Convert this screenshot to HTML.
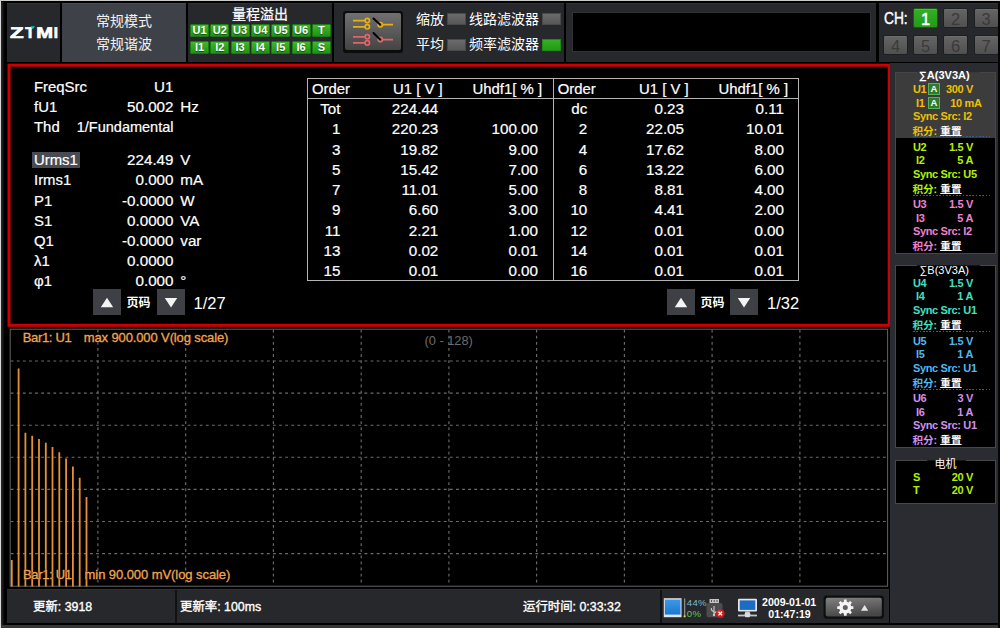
<!DOCTYPE html><html lang="zh"><head><meta charset="utf-8"><title>Power Analyzer</title><style>
*{box-sizing:border-box;margin:0;padding:0}
html,body{width:1000px;height:628px;overflow:hidden;background:#000}
body{position:relative;font-family:"Liberation Sans","Noto Sans CJK SC",sans-serif;color:#fff;font-size:14px}
.ab{position:absolute}
.pn{position:absolute;top:3px;height:59px;background:#27282c;border-top:1px solid #323338}
.t{position:absolute;white-space:nowrap;line-height:1}
.cj{font-family:"Liberation Sans","Noto Sans CJK SC",sans-serif}
.gb{position:absolute;width:19px;height:13px;background:linear-gradient(#3fb82a,#1f9414);border:1px solid #1c7a12;border-radius:1px;color:#fff;font-weight:bold;font-size:11px;line-height:11px;text-align:center;text-shadow:0 1px 1px rgba(0,0,0,.5)}
.ind{position:absolute;width:19px;height:12px;background:linear-gradient(#6b6b6b,#575757);border:1px solid #4a4a4a}
.ind.on{background:linear-gradient(#33b024,#229a16);border-color:#1f8a14}
.chb{position:absolute;width:25px;height:20px;background:linear-gradient(#656565,#505050);border:1px solid #1d1e20;border-radius:2px;box-shadow:inset 0 1px 0 #6e6e6e;color:#3a3a3a;font-size:16.5px;line-height:18px;padding-top:1px;text-align:center}
.chb.on{background:linear-gradient(#35ae25,#249a18);border-color:#1a5a14;box-shadow:inset 0 1px 0 #4cc03a;color:#fff;-webkit-text-stroke:.5px #fff}
.d{position:absolute;white-space:nowrap;font-size:14.5px;line-height:16px;color:#fff;-webkit-text-stroke:.2px #fff}
.r{text-align:right}
.n{font-size:15.2px}
.l{font-size:14.9px}
.pb{position:absolute;width:28px;height:26px;background:#3f4046}
.sb{position:absolute;white-space:nowrap;font-weight:bold;font-size:11px;line-height:12px;letter-spacing:-.35px}
</style></head><body>
<div class="ab" style="left:0;top:0;width:1000px;height:1px;background:#c9c9c9"></div>
<div class="ab" style="left:0;top:1px;width:1px;height:627px;background:#d8d8d8"></div>
<div class="ab" style="left:1px;top:2px;width:3px;height:626px;background:linear-gradient(90deg,#2a2a2a,#0a0a0a)"></div>
<div class="pn" style="left:7px;width:53px"></div>
<svg class="ab" style="left:7px;top:20px" width="53" height="24" viewBox="7 20 53 24" role="img" aria-label="ZTMI"><title>ZTMI</title><text y="37.6" font-family="Liberation Sans,sans-serif" font-weight="bold" font-size="15.6" text-rendering="geometricPrecision" fill="#fff" stroke="#fff" stroke-width=".7"><tspan x="10" textLength="13.6" lengthAdjust="spacingAndGlyphs">Z</tspan><tspan x="25.2" textLength="9.6" lengthAdjust="spacingAndGlyphs">T</tspan><tspan x="36.2" textLength="16.8" lengthAdjust="spacingAndGlyphs">M</tspan><tspan x="53.7" textLength="4.2" lengthAdjust="spacingAndGlyphs">I</tspan></text><rect x="31.9" y="25" width="4.2" height="5" fill="#27282c"/><path d="M30.3 26.3h4.8l-2.4 3z" fill="#19c4b4"/></svg>
<div class="pn" style="left:62px;width:124px;background:#3e4147;border-top-color:#4a4d53"></div>
<div class="t cj" style="left:62px;width:124px;text-align:center;top:13px;font-size:14px;line-height:16px;color:#f2f2f2">常规模式</div>
<div class="t cj" style="left:62px;width:124px;text-align:center;top:36px;font-size:14px;line-height:16px;color:#f2f2f2">常规谐波</div>
<div class="pn" style="left:188px;width:144px"></div>
<div class="t cj" style="left:188px;width:144px;text-align:center;top:6px;font-size:14px;line-height:16px;font-weight:400;-webkit-text-stroke:.25px #fff">量程溢出</div>
<div class="gb" style="left:190.0px;top:24px">U1</div>
<div class="gb" style="left:190.0px;top:41px">I1</div>
<div class="gb" style="left:210.3px;top:24px">U2</div>
<div class="gb" style="left:210.3px;top:41px">I2</div>
<div class="gb" style="left:230.6px;top:24px">U3</div>
<div class="gb" style="left:230.6px;top:41px">I3</div>
<div class="gb" style="left:250.9px;top:24px">U4</div>
<div class="gb" style="left:250.9px;top:41px">I4</div>
<div class="gb" style="left:271.2px;top:24px">U5</div>
<div class="gb" style="left:271.2px;top:41px">I5</div>
<div class="gb" style="left:291.5px;top:24px">U6</div>
<div class="gb" style="left:291.5px;top:41px">I6</div>
<div class="gb" style="left:311.8px;top:24px">T</div>
<div class="gb" style="left:311.8px;top:41px">S</div>
<div class="pn" style="left:334px;width:230px"></div>
<div class="ab" style="left:342.5px;top:10.5px;width:60px;height:42px;background:#0c0c0c;border-radius:3px"></div>
<div class="ab" style="left:345px;top:13px;width:56px;height:37px;background:linear-gradient(#707070,#444);border-radius:2px"></div>
<svg class="ab" style="left:345px;top:13px" width="56" height="37" viewBox="345 13 56 37">
<g fill="none" stroke-width="1.7">
<g stroke="#e8b010"><path d="M353 20.6H365M353 26.8H365M383 24.7H393"/><circle cx="367.3" cy="20.6" r="2.2"/><circle cx="367.3" cy="26.8" r="2.2"/><circle cx="380.3" cy="24.7" r="2.2"/></g>
<g stroke="#e06468"><path d="M353 36.8H365M353 42.9H365M383 39.6H393"/><circle cx="367.3" cy="36.8" r="2.2"/><circle cx="367.3" cy="42.9" r="2.2"/><circle cx="380.3" cy="39.6" r="2.2"/></g>
<g stroke="#000" stroke-width="2" stroke-linecap="round"><path d="M373.5 18.5L380 24.5M373.5 33L380 39.4"/></g>
</g></svg>
<div class="t cj" style="left:416px;top:11px;font-size:14px;line-height:16px">缩放</div>
<div class="t cj" style="left:416px;top:36px;font-size:14px;line-height:16px">平均</div>
<div class="ind" style="left:447px;top:13px"></div>
<div class="ind" style="left:447px;top:39px"></div>
<div class="t cj" style="left:469px;top:11px;font-size:14px;line-height:16px">线路滤波器</div>
<div class="t cj" style="left:469px;top:36px;font-size:14px;line-height:16px">频率滤波器</div>
<div class="ind" style="left:542px;top:13px"></div>
<div class="ind on" style="left:542px;top:39px"></div>
<div class="pn" style="left:566px;width:310px"></div>
<div class="ab" style="left:572px;top:12px;width:299px;height:40px;background:#000;border:1px solid #303134"></div>
<div class="pn" style="left:879px;width:119px"></div>
<div class="t" style="left:884px;top:10px;font-size:16px;line-height:18px;-webkit-text-stroke:.4px #fff;transform:scaleX(.86);transform-origin:left">CH:</div>
<div class="chb on" style="left:913px;top:8px">1</div>
<div class="chb" style="left:943px;top:8px">2</div>
<div class="chb" style="left:973.5px;top:8px">3</div>
<div class="chb" style="left:883px;top:35px">4</div>
<div class="chb" style="left:913px;top:35px">5</div>
<div class="chb" style="left:943px;top:35px">6</div>
<div class="chb" style="left:973.5px;top:35px">7</div>
<svg class="ab" style="left:0;top:60px" width="900" height="270" viewBox="0 60 900 270"><rect x="9" y="65.2" width="880.2" height="260.1" fill="#000" stroke="#cc0000" stroke-width="3"/></svg>
<div class="ab" style="left:32px;top:152px;width:48px;height:16px;background:#494a52"></div>
<div class="d l" style="left:34px;top:78.6px">FreqSrc</div>
<div class="d r n" style="left:60px;width:113.5px;top:78.6px">U1</div>
<div class="d l" style="left:34px;top:98.9px">fU1</div>
<div class="d r n" style="left:60px;width:113.5px;top:98.9px">50.002</div>
<div class="d n" style="left:180.3px;top:98.9px">Hz</div>
<div class="d l" style="left:34px;top:119.1px">Thd</div>
<div class="d r" style="left:60px;width:113.5px;top:119.1px">1/Fundamental</div>
<div class="d l" style="left:34px;top:151.6px">Urms1</div>
<div class="d r n" style="left:60px;width:113.5px;top:151.6px">224.49</div>
<div class="d n" style="left:180.3px;top:151.6px">V</div>
<div class="d l" style="left:34px;top:172.4px">Irms1</div>
<div class="d r n" style="left:60px;width:113.5px;top:172.4px">0.000</div>
<div class="d n" style="left:180.3px;top:172.4px">mA</div>
<div class="d l" style="left:34px;top:192.6px">P1</div>
<div class="d r n" style="left:60px;width:113.5px;top:192.6px">-0.0000</div>
<div class="d n" style="left:180.3px;top:192.6px">W</div>
<div class="d l" style="left:34px;top:212.6px">S1</div>
<div class="d r n" style="left:60px;width:113.5px;top:212.6px">0.0000</div>
<div class="d n" style="left:180.3px;top:212.6px">VA</div>
<div class="d l" style="left:34px;top:232.6px">Q1</div>
<div class="d r n" style="left:60px;width:113.5px;top:232.6px">-0.0000</div>
<div class="d n" style="left:180.3px;top:232.6px">var</div>
<div class="d l" style="left:34px;top:253.0px">λ1</div>
<div class="d r n" style="left:60px;width:113.5px;top:253.0px">0.0000</div>
<div class="d l" style="left:34px;top:272.9px">φ1</div>
<div class="d r n" style="left:60px;width:113.5px;top:272.9px">0.000</div>
<div class="d n" style="left:180.3px;top:272.9px">°</div>
<div class="pb" style="left:93px;top:289px"><svg class="ab" style="left:0;top:0" width="28" height="26"><path d="M7.8 18.2L14 8.8l6.2 9.4z" fill="#f4f4f4"/></svg></div>
<div class="pb" style="left:156.5px;top:289px"><svg class="ab" style="left:0;top:0" width="28" height="26"><path d="M7.8 9L14 18.4 20.2 9z" fill="#f4f4f4"/></svg></div>
<div class="t cj" style="left:126.5px;top:296.5px;font-size:12px;line-height:13px;font-weight:bold">页码</div>
<div class="t" style="left:193.5px;top:293.5px;font-size:16.5px;line-height:18px">1/27</div>
<div class="pb" style="left:666.5px;top:289px"><svg class="ab" style="left:0;top:0" width="28" height="26"><path d="M7.8 18.2L14 8.8l6.2 9.4z" fill="#f4f4f4"/></svg></div>
<div class="pb" style="left:730px;top:289px"><svg class="ab" style="left:0;top:0" width="28" height="26"><path d="M7.8 9L14 18.4 20.2 9z" fill="#f4f4f4"/></svg></div>
<div class="t cj" style="left:700.5px;top:296.5px;font-size:12px;line-height:13px;font-weight:bold">页码</div>
<div class="t" style="left:767px;top:293.5px;font-size:16.5px;line-height:18px">1/32</div>
<div class="ab" style="left:307px;top:78px;width:492px;height:203px;border:1px solid #b4b4b4"></div>
<div class="ab" style="left:307px;top:98px;width:492px;height:1px;background:#b4b4b4"></div>
<div class="ab" style="left:552.5px;top:78px;width:1px;height:203px;background:#b4b4b4"></div>
<div class="d l" style="left:312.0px;top:81px">Order</div>
<div class="d l" style="left:393px;top:81px">U1 [ V ]</div>
<div class="d l" style="left:472.5px;top:81px">Uhdf1[ % ]</div>
<div class="d l" style="left:557.7px;top:81px">Order</div>
<div class="d l" style="left:639px;top:81px">U1 [ V ]</div>
<div class="d l" style="left:718.5px;top:81px">Uhdf1[ % ]</div>
<div class="d r n" style="left:300px;width:40.5px;top:101.4px">Tot</div><div class="d r n" style="left:380px;width:58.3px;top:101.4px">224.44</div><div class="d r n" style="left:470px;width:68px;top:101.4px"></div>
<div class="d r n" style="left:300px;width:40.5px;top:121.4px">1</div><div class="d r n" style="left:380px;width:58.3px;top:121.4px">220.23</div><div class="d r n" style="left:470px;width:68px;top:121.4px">100.00</div>
<div class="d r n" style="left:300px;width:40.5px;top:141.8px">3</div><div class="d r n" style="left:380px;width:58.3px;top:141.8px">19.82</div><div class="d r n" style="left:470px;width:68px;top:141.8px">9.00</div>
<div class="d r n" style="left:300px;width:40.5px;top:162.0px">5</div><div class="d r n" style="left:380px;width:58.3px;top:162.0px">15.42</div><div class="d r n" style="left:470px;width:68px;top:162.0px">7.00</div>
<div class="d r n" style="left:300px;width:40.5px;top:182.0px">7</div><div class="d r n" style="left:380px;width:58.3px;top:182.0px">11.01</div><div class="d r n" style="left:470px;width:68px;top:182.0px">5.00</div>
<div class="d r n" style="left:300px;width:40.5px;top:202.4px">9</div><div class="d r n" style="left:380px;width:58.3px;top:202.4px">6.60</div><div class="d r n" style="left:470px;width:68px;top:202.4px">3.00</div>
<div class="d r n" style="left:300px;width:40.5px;top:222.8px">11</div><div class="d r n" style="left:380px;width:58.3px;top:222.8px">2.21</div><div class="d r n" style="left:470px;width:68px;top:222.8px">1.00</div>
<div class="d r n" style="left:300px;width:40.5px;top:242.9px">13</div><div class="d r n" style="left:380px;width:58.3px;top:242.9px">0.02</div><div class="d r n" style="left:470px;width:68px;top:242.9px">0.01</div>
<div class="d r n" style="left:300px;width:40.5px;top:263.0px">15</div><div class="d r n" style="left:380px;width:58.3px;top:263.0px">0.01</div><div class="d r n" style="left:470px;width:68px;top:263.0px">0.00</div>
<div class="d r n" style="left:547px;width:40.3px;top:101.4px">dc</div><div class="d r n" style="left:624px;width:60px;top:101.4px">0.23</div><div class="d r n" style="left:716px;width:68px;top:101.4px">0.11</div>
<div class="d r n" style="left:547px;width:40.3px;top:121.4px">2</div><div class="d r n" style="left:624px;width:60px;top:121.4px">22.05</div><div class="d r n" style="left:716px;width:68px;top:121.4px">10.01</div>
<div class="d r n" style="left:547px;width:40.3px;top:141.8px">4</div><div class="d r n" style="left:624px;width:60px;top:141.8px">17.62</div><div class="d r n" style="left:716px;width:68px;top:141.8px">8.00</div>
<div class="d r n" style="left:547px;width:40.3px;top:162.0px">6</div><div class="d r n" style="left:624px;width:60px;top:162.0px">13.22</div><div class="d r n" style="left:716px;width:68px;top:162.0px">6.00</div>
<div class="d r n" style="left:547px;width:40.3px;top:182.0px">8</div><div class="d r n" style="left:624px;width:60px;top:182.0px">8.81</div><div class="d r n" style="left:716px;width:68px;top:182.0px">4.00</div>
<div class="d r n" style="left:547px;width:40.3px;top:202.4px">10</div><div class="d r n" style="left:624px;width:60px;top:202.4px">4.41</div><div class="d r n" style="left:716px;width:68px;top:202.4px">2.00</div>
<div class="d r n" style="left:547px;width:40.3px;top:222.8px">12</div><div class="d r n" style="left:624px;width:60px;top:222.8px">0.01</div><div class="d r n" style="left:716px;width:68px;top:222.8px">0.00</div>
<div class="d r n" style="left:547px;width:40.3px;top:242.9px">14</div><div class="d r n" style="left:624px;width:60px;top:242.9px">0.01</div><div class="d r n" style="left:716px;width:68px;top:242.9px">0.01</div>
<div class="d r n" style="left:547px;width:40.3px;top:263.0px">16</div><div class="d r n" style="left:624px;width:60px;top:263.0px">0.01</div><div class="d r n" style="left:716px;width:68px;top:263.0px">0.01</div>
<div class="ab" style="left:7px;top:327px;width:883px;height:261px;background:#000"></div>
<svg class="ab" style="left:0;top:326px" width="892" height="264" viewBox="0 326 892 264"><rect x="10.2" y="329.2" width="877.4" height="257" fill="none" stroke="#636363" stroke-width="1"/><path d="M97.9 329.7V586M185.7 329.7V586M273.4 329.7V586M361.2 329.7V586M448.9 329.7V586M536.6 329.7V586M624.4 329.7V586M712.1 329.7V586M799.9 329.7V586M10.7 361.0H887M10.7 393.1H887M10.7 425.2H887M10.7 457.2H887M10.7 489.4H887M10.7 521.5H887M10.7 553.6H887" stroke="#6c6c6c" stroke-width="1.15" stroke-dasharray="2.8 3.3" fill="none"/><path d="M11.8 586.5V560.0M18.6 586.5V368.6M25.4 586.5V432.8M32.2 586.5V435.8M39.0 586.5V439.1M45.8 586.5V442.8M52.5 586.5V447.1M59.3 586.5V452.2M66.1 586.5V458.4M72.9 586.5V466.4M79.7 586.5V477.7M86.5 586.5V497.0" stroke="#e58f38" stroke-width="1.8" fill="none"/></svg>
<div class="t" style="left:22.7px;top:330.5px;color:#f2a550;-webkit-text-stroke:.3px #f2a550;font-size:13px;line-height:14px;text-shadow:0 0 1.5px #000,0 0 1px #000"><span style="letter-spacing:-.33px">Bar1: U1</span><span style="letter-spacing:-.12px;margin-left:12.4px">max 900.000 V(log scale)</span></div>
<div class="t" style="left:23px;top:567.5px;color:#f2a550;-webkit-text-stroke:.3px #f2a550;font-size:13px;line-height:14px;text-shadow:0 0 1.5px #000,0 0 1px #000"><span style="letter-spacing:-.33px">Bar1: U1</span><span style="letter-spacing:-.07px;margin-left:12.9px">min 90.000 mV(log scale)</span></div>
<div class="t" style="left:424.5px;top:333.5px;font-size:12.8px;line-height:14px;color:#6c6c6c">(0 - 128)</div>
<div class="ab" style="left:7px;top:589px;width:882px;height:34px;background:#27282c;border-top:1px solid #303136"></div>
<div class="ab" style="left:1px;top:625px;width:999px;height:3px;background:#373737"></div>
<div class="ab" style="left:175px;top:590px;width:2px;height:33px;background:#111"></div>
<div class="ab" style="left:660px;top:590px;width:2px;height:33px;background:#111"></div>
<div class="t cj" style="left:33px;top:600px;font-size:12.4px;line-height:15px;-webkit-text-stroke:.35px #fff">更新: 3918</div>
<div class="t cj" style="left:180px;top:600px;font-size:12.4px;line-height:15px;-webkit-text-stroke:.35px #fff">更新率: 100ms</div>
<div class="t cj" style="left:523px;top:600px;font-size:12.4px;line-height:15px;-webkit-text-stroke:.35px #fff">运行时间: 0:33:32</div>
<svg class="ab" style="left:660px;top:590px" width="230" height="34" viewBox="660 590 230 34"><defs><linearGradient id="gb" x1="0" y1="0" x2="0" y2="1"><stop offset="0" stop-color="#3b98e8"/><stop offset="1" stop-color="#1c78d2"/></linearGradient><linearGradient id="gg" x1="0" y1="0" x2="0.25" y2="1"><stop offset="0" stop-color="#828282"/><stop offset="1" stop-color="#474747"/></linearGradient></defs><rect x="663.8" y="598.2" width="17.7" height="19" fill="#e4e8ec"/><rect x="664.8" y="599.8" width="15.7" height="14.8" fill="url(#gb)"/><rect x="664.3" y="598.6" width="16.7" height="1" fill="#b8b0a8"/><rect x="684" y="598.5" width="1.3" height="18.5" fill="#8a8a8a"/><circle cx="684.6" cy="616.3" r="1.1" fill="#c8e020"/><rect x="709.5" y="599" width="9.5" height="4.2" fill="#c4c4c4"/><path d="M711.5 600v2M714.2 600v2M717 600v2" stroke="#555" stroke-width="1"/><rect x="706.5" y="603" width="16" height="14.3" rx="2" fill="#4c4c4c"/><path d="M714 606v9M714 612l-2.6-2v-2M714 613.5l2.4-2" stroke="#c8c8c8" stroke-width="1.1" fill="none"/><circle cx="714" cy="615" r="1.2" fill="#c8c8c8"/><circle cx="720.3" cy="613.6" r="4.4" fill="#d01818"/><circle cx="719.6" cy="612.6" r="2.6" fill="#e84040" opacity=".6"/><path d="M718.5 611.8l3.6 3.6M722.1 611.8l-3.6 3.6" stroke="#fff" stroke-width="1.3"/><rect x="738" y="598.8" width="19" height="12.7" rx="1" fill="#e6e6e6"/><rect x="739.7" y="600.4" width="15.6" height="9.5" fill="#1b6cc4"/><path d="M745.5 611.5h4l1.2 3.2h-6.4z" fill="#d0d0d0"/><rect x="738" y="614.6" width="19" height="1.8" fill="#c4c4c4"/><rect x="745" y="613.6" width="5" height="3.6" rx="1" fill="#dcdcdc"/><rect x="823.6" y="595.6" width="60.3" height="23.1" rx="3" fill="#0e0e0e"/><rect x="825.7" y="597.7" width="56.1" height="18.9" rx="2" fill="url(#gg)"/><path d="M851.23 606.18L853.40 606.32L853.40 608.88L851.23 609.02L850.50 610.79L851.93 612.42L850.12 614.23L848.49 612.80L846.72 613.53L846.58 615.70L844.02 615.70L843.88 613.53L842.11 612.80L840.48 614.23L838.67 612.42L840.10 610.79L839.37 609.02L837.20 608.88L837.20 606.32L839.37 606.18L840.10 604.41L838.67 602.78L840.48 600.97L842.11 602.40L843.88 601.67L844.02 599.50L846.58 599.50L846.72 601.67L848.49 602.40L850.12 600.97L851.93 602.78L850.50 604.41ZM847.80 607.60A2.5 2.5 0 1 0 842.80 607.60A2.5 2.5 0 1 0 847.80 607.60Z" fill="#f4f4f4" fill-rule="evenodd"/><path d="M861 610.8l3.6-5.8 3.6 5.8z" fill="#e6e6e6"/></svg>
<div class="t" style="left:686.8px;top:597.5px;font-size:9.6px;line-height:10px;color:#7ab8d0;letter-spacing:.3px">44%</div>
<div class="t" style="left:686.8px;top:608.7px;font-size:9.6px;line-height:10px;color:#58c858;letter-spacing:.3px">0%</div>
<div class="t" style="left:762px;top:595.5px;font-size:10.6px;line-height:12px;font-weight:bold;letter-spacing:0">2009-01-01</div>
<div class="t" style="left:768.3px;top:608.2px;font-size:10.6px;line-height:12px;font-weight:bold;letter-spacing:0">01:47:19</div>
<div class="ab" style="left:890px;top:63px;width:108px;height:560px;background:#2b2c31"></div>
<div class="ab" style="left:895px;top:72px;width:101px;height:182px;border:1px solid #464646;background:#000"></div>
<div class="ab" style="left:896px;top:73px;width:99px;height:65px;background:#3c3c3c"></div>
<div class="ab" style="left:917px;top:72px;width:63px;height:1px;background:#38383a"></div>
<div class="sb" style="left:919px;top:69px;color:#fff;font-size:11px;line-height:13px;letter-spacing:0">∑A(3V3A)</div>
<div class="sb" style="left:913px;top:83.0px;color:#f0c000">U1</div>
<div class="sb r" style="left:930px;width:43px;top:83.0px;color:#f0c000">300 V</div>
<div class="sb" style="left:916px;top:96.5px;color:#f0c000">I1</div>
<div class="sb r" style="left:930px;width:51.5px;top:96.5px;color:#f0c000">10 mA</div>
<div class="sb" style="left:913px;top:110.0px;color:#f0c000">Sync Src: I2</div>
<div class="sb cj" style="left:912.4px;top:125.0px;color:#f0c000;font-weight:bold;letter-spacing:0;font-size:10.6px">积分:<span style="color:#fff;text-decoration:underline;text-decoration-thickness:1px;text-underline-offset:.3px;margin-left:3.2px">重置</span></div>
<div class="ab" style="left:928px;top:83.0px;width:12px;height:12px;background:#2f7a30;border:1px solid #58b058;color:#fff;font-size:9.5px;line-height:10px;font-weight:bold;text-align:center">A</div>
<div class="ab" style="left:928px;top:96.5px;width:12px;height:12px;background:#2f7a30;border:1px solid #58b058;color:#fff;font-size:9.5px;line-height:10px;font-weight:bold;text-align:center">A</div>
<div class="sb" style="left:913px;top:140.6px;color:#b4f000">U2</div>
<div class="sb r" style="left:930px;width:43px;top:140.6px;color:#b4f000">1.5 V</div>
<div class="sb" style="left:916px;top:154.1px;color:#b4f000">I2</div>
<div class="sb r" style="left:930px;width:43px;top:154.1px;color:#b4f000">5 A</div>
<div class="sb" style="left:913px;top:167.6px;color:#b4f000">Sync Src: U5</div>
<div class="sb cj" style="left:912.4px;top:182.6px;color:#b4f000;font-weight:bold;letter-spacing:0;font-size:10.6px">积分:<span style="color:#fff;text-decoration:underline;text-decoration-thickness:1px;text-underline-offset:.3px;margin-left:3.2px">重置</span></div>
<div class="sb" style="left:913px;top:198.0px;color:#f080d0">U3</div>
<div class="sb r" style="left:930px;width:43px;top:198.0px;color:#f080d0">1.5 V</div>
<div class="sb" style="left:916px;top:211.5px;color:#f080d0">I3</div>
<div class="sb r" style="left:930px;width:43px;top:211.5px;color:#f080d0">5 A</div>
<div class="sb" style="left:913px;top:225.0px;color:#f080d0">Sync Src: I2</div>
<div class="sb cj" style="left:912.4px;top:240.0px;color:#f080d0;font-weight:bold;letter-spacing:0;font-size:10.6px">积分:<span style="color:#fff;text-decoration:underline;text-decoration-thickness:1px;text-underline-offset:.3px;margin-left:3.2px">重置</span></div>
<div class="ab" style="left:913px;top:195px;width:77px;height:1px;background:repeating-linear-gradient(90deg,#355d86 0 1.7px,transparent 1.7px 3.3px)"></div>
<div class="ab" style="left:913px;top:136px;width:77px;height:1px;background:repeating-linear-gradient(90deg,#355d86 0 1.7px,transparent 1.7px 3.3px)"></div>
<div class="ab" style="left:895px;top:265px;width:101px;height:183px;border:1px solid #464646;background:#000"></div>
<div class="ab" style="left:917px;top:265px;width:63px;height:1px;background:#141416"></div>
<div class="sb" style="left:919.5px;top:263.6px;color:#fff;font-size:11px;line-height:13px;font-weight:normal;letter-spacing:0">∑B(3V3A)</div>
<div class="sb" style="left:913px;top:276.9px;color:#40e0c0">U4</div>
<div class="sb r" style="left:930px;width:43px;top:276.9px;color:#40e0c0">1.5 V</div>
<div class="sb" style="left:916px;top:290.4px;color:#40e0c0">I4</div>
<div class="sb r" style="left:930px;width:43px;top:290.4px;color:#40e0c0">1 A</div>
<div class="sb" style="left:913px;top:303.9px;color:#40e0c0">Sync Src: U1</div>
<div class="sb cj" style="left:912.4px;top:318.9px;color:#40e0c0;font-weight:bold;letter-spacing:0;font-size:10.6px">积分:<span style="color:#fff;text-decoration:underline;text-decoration-thickness:1px;text-underline-offset:.3px;margin-left:3.2px">重置</span></div>
<div class="sb" style="left:913px;top:334.6px;color:#50b8f0">U5</div>
<div class="sb r" style="left:930px;width:43px;top:334.6px;color:#50b8f0">1.5 V</div>
<div class="sb" style="left:916px;top:348.1px;color:#50b8f0">I5</div>
<div class="sb r" style="left:930px;width:43px;top:348.1px;color:#50b8f0">1 A</div>
<div class="sb" style="left:913px;top:361.6px;color:#50b8f0">Sync Src: U1</div>
<div class="sb cj" style="left:912.4px;top:376.6px;color:#50b8f0;font-weight:bold;letter-spacing:0;font-size:10.6px">积分:<span style="color:#fff;text-decoration:underline;text-decoration-thickness:1px;text-underline-offset:.3px;margin-left:3.2px">重置</span></div>
<div class="sb" style="left:913px;top:392.4px;color:#d090f0">U6</div>
<div class="sb r" style="left:930px;width:43px;top:392.4px;color:#d090f0">3 V</div>
<div class="sb" style="left:916px;top:405.9px;color:#d090f0">I6</div>
<div class="sb r" style="left:930px;width:43px;top:405.9px;color:#d090f0">1 A</div>
<div class="sb" style="left:913px;top:419.4px;color:#d090f0">Sync Src: U1</div>
<div class="sb cj" style="left:912.4px;top:434.4px;color:#d090f0;font-weight:bold;letter-spacing:0;font-size:10.6px">积分:<span style="color:#fff;text-decoration:underline;text-decoration-thickness:1px;text-underline-offset:.3px;margin-left:3.2px">重置</span></div>
<div class="ab" style="left:913px;top:331px;width:77px;height:1px;background:repeating-linear-gradient(90deg,#355d86 0 1.7px,transparent 1.7px 3.3px)"></div>
<div class="ab" style="left:913px;top:389px;width:77px;height:1px;background:repeating-linear-gradient(90deg,#355d86 0 1.7px,transparent 1.7px 3.3px)"></div>
<div class="ab" style="left:895px;top:460px;width:101px;height:44px;border:1px solid #464646;background:#000"></div>
<div class="ab" style="left:927px;top:460px;width:39px;height:1px;background:#141416"></div>
<div class="sb cj" style="left:933.5px;top:457.5px;color:#fff;font-size:11px;padding:0 1px;font-weight:normal;letter-spacing:0">电机</div>
<div class="sb" style="left:913px;top:471px;color:#b4f000">S</div><div class="sb r" style="left:930px;width:43px;top:471px;color:#b4f000">20 V</div>
<div class="sb" style="left:913px;top:484px;color:#b4f000">T</div><div class="sb r" style="left:930px;width:43px;top:484px;color:#b4f000">20 V</div>
<div class="ab" style="left:998px;top:1px;width:2px;height:627px;background:#050505"></div>
</body></html>
